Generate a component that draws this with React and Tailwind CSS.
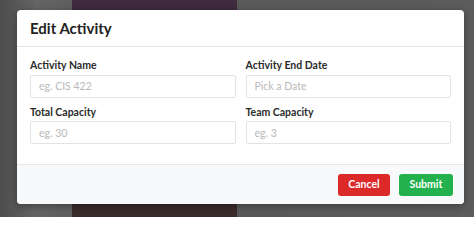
export default function App() {
  const fields = [
    [
      { label: "Activity Name", placeholder: "eg. CIS 422" },
      { label: "Activity End Date", placeholder: "Pick a Date" },
    ],
    [
      { label: "Total Capacity", placeholder: "eg. 30" },
      { label: "Team Capacity", placeholder: "eg. 3" },
    ],
  ];

  return (
    <div className="relative w-[474px] h-[217px] overflow-hidden" style={{ fontFamily: "Lato, 'Open Sans', sans-serif" }}>
      {/* blurred backdrop */}
      <div className="flex h-full">
        <div className="w-[72px] bg-gradient-to-r from-[#4d4d4d] via-[#656565] to-[#5f5f5f]" />
        <div className="w-[165px] bg-gradient-to-b from-[#3f2a3f] via-[#3a2b35] to-[#3a2c2a]" />
        <div className="flex-1 bg-gradient-to-r from-[#5a5a5a] to-[#5c5c5c]" />
      </div>

      {/* modal */}
      <div className="absolute left-[17px] top-[10px] w-[447px] h-[194px] bg-white rounded-[4px] shadow-[0_2px_8px_rgba(0,0,0,0.35)] flex flex-col overflow-hidden">
        <div className="h-[37px] flex items-center px-[13px] border-b border-[#e6e6e6]">
          <h2 className="text-[15px] font-bold text-[#222] pt-[1px]">Edit Activity</h2>
        </div>
        <div className="flex-1 px-[13px] pt-[12px] flex flex-col gap-[8px]">
          {fields.map((row, i) => (
            <div key={i} className="grid grid-cols-2 gap-[10px]">
              {row.map((f) => (
                <div key={f.label}>
                  <label className="block text-[10.5px] font-bold text-[#2b2b2b] leading-[12px] mb-[1px]">{f.label}</label>
                  <input
                    className="w-full h-[23px] border border-[#e3e3e3] rounded-[2px] px-[8px] text-[10.5px] placeholder:text-[#b9b9b9] outline-none"
                    placeholder={f.placeholder}
                  />
                </div>
              ))}
            </div>
          ))}
        </div>
        <div className="h-[40px] bg-[#f8f9fa] border-t border-[#e6e6e6] flex items-center justify-end gap-[9px] pr-[11px]">
          <button className="w-[52px] h-[22px] rounded-[3px] bg-[#dc2a2a] text-white text-[10.5px] font-bold">Cancel</button>
          <button className="w-[54px] h-[22px] rounded-[3px] bg-[#22b14c] text-white text-[10.5px] font-bold">Submit</button>
        </div>
      </div>
    </div>
  );
}
